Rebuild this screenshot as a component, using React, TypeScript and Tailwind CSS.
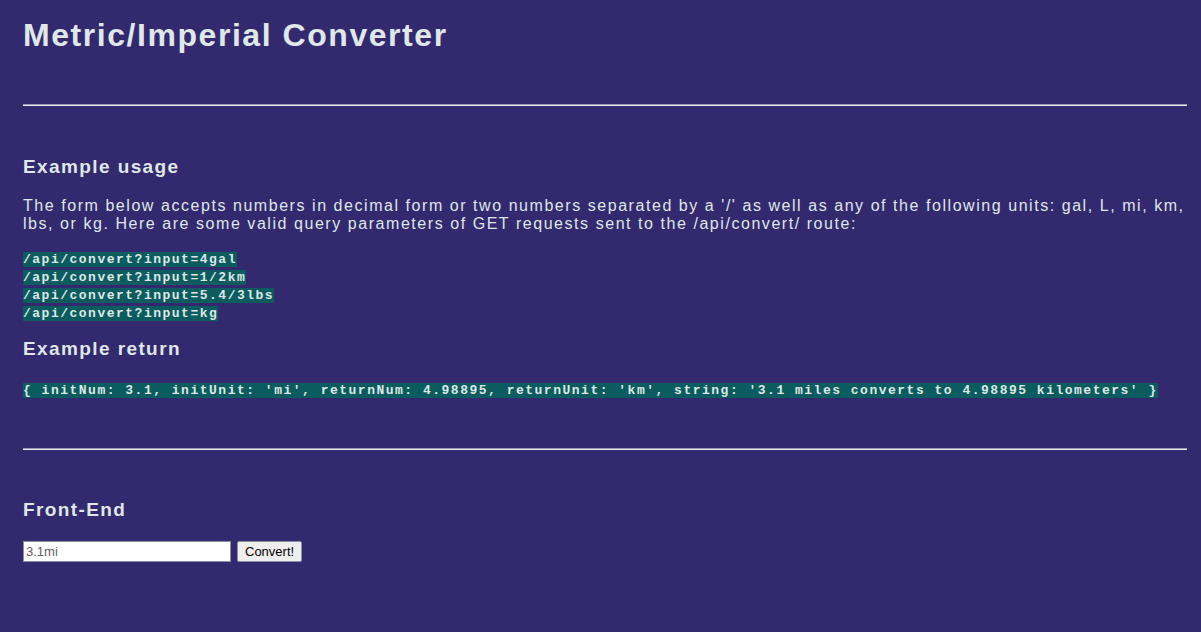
export default function App() {
  const examples = [
    "/api/convert?input=4gal",
    "/api/convert?input=1/2km",
    "/api/convert?input=5.4/3lbs",
    "/api/convert?input=kg",
  ];

  return (
    <div className="min-h-[632px] bg-[#33296f] px-[23px] pb-10 text-[#dfe7e8] [font-family:'Liberation_Sans',Arial,sans-serif] tracking-[1.55px]">
      <h1 className="pt-[17px] text-[32px] font-bold leading-[37px]">Metric/Imperial Converter</h1>

      <div className="mt-[50px] h-[2px] w-[1164px] border-t border-b border-t-[#9b97b6] border-b-[#e8e8ee]" />

      <h3 className="mt-[50px] text-[19px] font-bold leading-[22px] tracking-[1.4px]">Example usage</h3>
      <p className="mt-[19px] w-[1164px] text-[16px] leading-[18px]">
        The form below accepts numbers in decimal form or two numbers separated by a '/' as well as any of the
        following units: gal, L, mi, km, lbs, or kg. Here are some valid query parameters of GET requests sent to the
        /api/convert/ route:
      </p>

      <div className="mt-[18px] text-[13px] leading-[18px] [font-family:'Liberation_Mono','Courier_New',monospace]">
        {examples.map((e) => (
          <div key={e}>
            <code className="bg-[#0a5c5e] font-bold tracking-[1.5px]">{e}</code>
          </div>
        ))}
      </div>

      <h3 className="mt-[15px] text-[19px] font-bold leading-[22px] tracking-[1.4px]">Example return</h3>
      <div className="mt-[22px] text-[13px] leading-[18px] [font-family:'Liberation_Mono','Courier_New',monospace]">
        <code className="bg-[#0a5c5e] font-bold tracking-[1.5px]">
          {"{ initNum: 3.1, initUnit: 'mi', returnNum: 4.98895, returnUnit: 'km', string: '3.1 miles converts to 4.98895 kilometers' }"}
        </code>
      </div>

      <div className="mt-[48px] h-[2px] w-[1164px] border-t border-b border-t-[#9b97b6] border-b-[#e8e8ee]" />

      <h3 className="mt-[49px] text-[19px] font-bold leading-[22px] tracking-[1.4px]">Front-End</h3>
      <form className="mt-[20px] flex items-center gap-[6px] tracking-normal" onSubmit={(ev) => ev.preventDefault()}>
        <input
          type="text"
          placeholder="3.1mi"
          className="h-[21px] w-[208px] border border-[#8f8f9d] bg-white px-[2px] text-[13px] text-black placeholder:text-[#5f5f5f] [font-family:Arial,'Liberation_Sans',sans-serif] focus:outline-none"
        />
        <button
          type="submit"
          className="h-[21px] rounded-[2px] border border-[#8f8f9d] bg-[#efefef] px-[7px] text-[13px] leading-[17px] text-black [font-family:Arial,'Liberation_Sans',sans-serif]"
        >
          Convert!
        </button>
      </form>
    </div>
  );
}
